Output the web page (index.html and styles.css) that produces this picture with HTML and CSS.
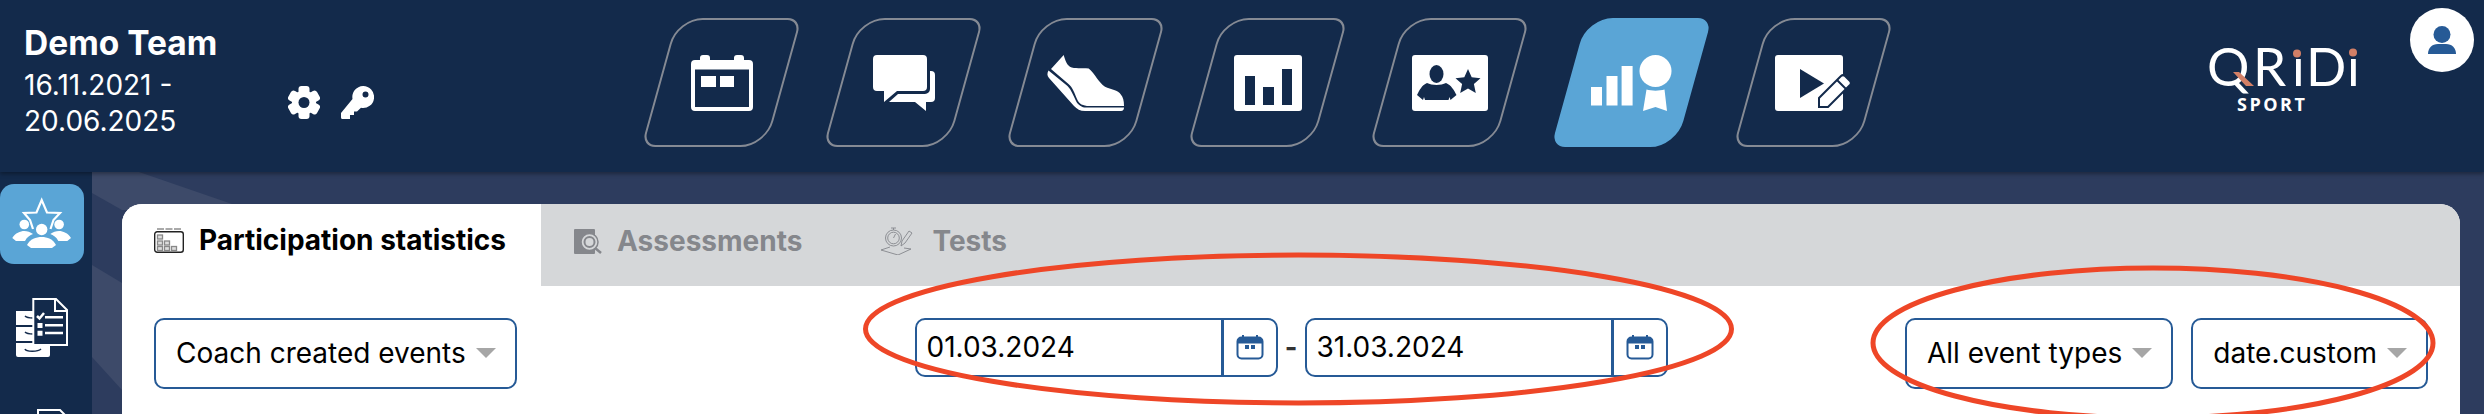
FILE: index.html
```html
<!DOCTYPE html>
<html>
    <head>
        <meta charset="utf-8">
        <title>Participation statistics</title>
        <link rel="stylesheet" href="styles.css">
    </head>
    <body>
        <header class="topbar">
            <div class="team">
                <div class="team-info">
                    <h1>Demo Team</h1>
                    <p>16.11.2021 -<br>20.06.2025</p>
                </div>
                <div class="team-tools">
                    <svg width="32" height="33" viewBox="0 0 32 33">
                        <g fill="#fff">
                            <rect x="10.500" y="0" width="11" height="33" rx="3"/>
                            <rect x="10.500" y="0" width="11" height="33" rx="3" transform="rotate(60 16 16.500)"/>
                            <rect x="10.500" y="0" width="11" height="33" rx="3" transform="rotate(120 16 16.500)"/>
                            <circle cx="16" cy="16.500" r="12"/>
                        </g>
                        <circle cx="16" cy="16.500" r="5.500" fill="#132a4b"/>
                    </svg>
                    <svg width="33" height="33" viewBox="0 0 33 33">
                        <path fill="#fff" fill-rule="evenodd" d="M22 0a11 11 0 1 1-2 21.800L16 25.500h-3v3.500H9v4H1.500a1.500 1.500 0 0 1-1.500-1.500V27L11.500 13A11 11 0 0 1 22 0zm2.500 5.500a3 3 0 1 0 0 6 3 3 0 0 0 0-6z"/>
                    </svg>
                </div>
            </div>
            <nav class="modules">
                <a class="tile">
                    <svg width="62" height="56" viewBox="0 0 62 56">
                        <path fill="#fff" fill-rule="evenodd" d="M12 0h4a3 3 0 0 1 3 3v2h24V3a3 3 0 0 1 3-3h4a3 3 0 0 1 3 3v2h5a4 4 0 0 1 4 4v43a4 4 0 0 1-4 4H4a4 4 0 0 1-4-4V9a4 4 0 0 1 4-4h5V3a3 3 0 0 1 3-3zM4 14.500V52h54V14.500z"/>
                        <rect x="10" y="21" width="15" height="11" fill="#fff"/>
                        <rect x="29" y="21" width="14" height="11" fill="#fff"/>
                    </svg>
                </a>
                <a class="tile">
                    <svg width="62" height="56" viewBox="0 0 62 56" fill="#fff">
                        <path d="M4 0h46a4 4 0 0 1 4 4v28a4 4 0 0 1-4 4H24L11 47V36H4a4 4 0 0 1-4-4V4a4 4 0 0 1 4-4z"/>
                        <path d="M57 16h1a4 4 0 0 1 4 4v23a4 4 0 0 1-4 4h-5v9L42 47H16l9-8h27a5 5 0 0 0 5-5z"/>
                    </svg>
                </a>
                <a class="tile">
                    <svg width="77" height="56" viewBox="0 0 77 56" fill="#fff">
                        <path d="M16.700 0c1.500 5 3 11 8 12.500 6 1.300 12 .3 17 1 6 5 10 14 16.300 18.200 6 2.800 13 3 16 8 2 2.300 3 6 3 11.300H42c-6 0-10-2-12-7-3-7-4-11-8.500-15L4 14z"/>
                        <path d="M1.500 15.500 20.500 31c4 4 6 10 8.500 15 2 4 6 6.600 10 6.600h38c0 2-1 3.400-3 3.400H38c-5 0-8-2-11-5L2 23c-2-2-2-5-.5-7.500z"/>
                    </svg>
                </a>
                <a class="tile">
                    <svg width="68" height="56" viewBox="0 0 68 56">
                        <rect width="68" height="56" rx="3" fill="#fff"/>
                        <g fill="#132a4b">
                            <rect x="11" y="21" width="10" height="29"/>
                            <rect x="29" y="32" width="11" height="18"/>
                            <rect x="48" y="14" width="10" height="36"/>
                        </g>
                    </svg>
                </a>
                <a class="tile">
                    <svg width="76" height="56" viewBox="0 0 76 56">
                        <rect width="76" height="56" rx="3" fill="#fff"/>
                        <g fill="#132a4b">
                            <ellipse cx="24.500" cy="19" rx="7" ry="9"/>
                            <path d="M15 28c5 2.500 14 2.500 19 0 5 2 8 7 10.500 12l-6 5-1-3-1 3H13l-1-3-1 3-6-5c2.500-5 5-10 10-12z"/>
                            <path d="m56 14 3.700 8.300 8.800.9-6.600 5.900 1.900 8.900-7.800-4.600-7.800 4.600 1.900-8.900-6.600-5.900 8.800-.9z"/>
                        </g>
                    </svg>
                </a>
                <a class="tile tile-active">
                    <svg width="81" height="56" viewBox="0 0 81 56" fill="#fff">
                        <rect x="0" y="32" width="11" height="18.500"/>
                        <rect x="15.500" y="21" width="11" height="29.500"/>
                        <rect x="30.600" y="11" width="11" height="39.500"/>
                        <ellipse cx="64.500" cy="16" rx="16" ry="16"/>
                        <path d="M55.500 34.500c5 1.500 13 1.500 18 0L76 56l-11.500-4L52 56z"/>
                    </svg>
                </a>
                <a class="tile">
                    <svg width="77" height="56" viewBox="0 0 77 56">
                        <rect width="68" height="56" rx="3" fill="#fff"/>
                        <path d="M25 14 49 28.500 25 43z" fill="#132a4b"/>
                        <path d="M44 52v-9l22-22a3 3 0 0 1 4 0l5 5a3 3 0 0 1 0 4L53 52z" fill="#fff" stroke="#132a4b" stroke-width="2"/>
                        <path d="m62 25 9 9" stroke="#132a4b" stroke-width="2"/>
                    </svg>
                </a>
            </nav>
            <svg class="logo" width="150" height="66" viewBox="0 0 150 66">
                <text class="logo-name" y="37" x="-3 43 82 96 137">QRıDı</text>
                <path d="M23 23h6l15 14h-8z" fill="#d27f66"/>
                <circle cx="87" cy="4.500" r="4" fill="#d27f66"/>
                <circle cx="143" cy="3.500" r="4" fill="#d27f66"/>
                <text class="logo-sport" x="27" y="62">SPORT</text>
            </svg>
            <div class="avatar">
                <svg width="28" height="28" viewBox="0 0 28 28" fill="#265a96">
                    <circle cx="14" cy="8.500" r="8.500"/>
                    <path d="M0 28c0-6 4-10 10-10h8c6 0 10 4 10 10z"/>
                </svg>
            </div>
        </header>
        <div class="layout">
            <aside class="sidebar">
                <a class="side-item side-active">
                    <svg width="84" height="80" viewBox="0 0 84 80" fill="#fff">
                        <path d="M33 45 30 36 24 29 36.500 28.500 41.700 16 47 28.500 60 29 53.500 36 50.500 45" fill="none" stroke="#fff" stroke-width="2.200"/>
                        <circle cx="41.700" cy="45.500" r="5.700"/>
                        <circle cx="24.300" cy="40.500" r="4.800"/>
                        <circle cx="59.100" cy="40.500" r="4.800"/>
                        <path d="M27 61c3-6 9-8 14.700-8s11.300 2 14.300 8l-4 3H31z"/>
                        <path d="M12.300 54c3-5 8-7 12-7 3 0 6 1 8.700 3-3 1-6 3-8 7h-9z"/>
                        <path d="M71 54c-3-5-8-7-12-7-3 0-6 1-8.700 3 3 1 6 3 8 7h9z"/>
                    </svg>
                </a>
                <a class="side-doc">
                    <svg width="52" height="60" viewBox="0 0 52 60">
                        <path d="M0 13h34v14H0zM0 29h34v14H0zM0 45h34v12a2 2 0 0 1-2 2H2a2 2 0 0 1-2-2z" fill="#fff"/>
                        <path d="M9 18c2 2 5 2 8 2M9 34c2 2 5 2 8 2M9 51c1 3 13 3 16 0" fill="none" stroke="#132a4b" stroke-width="1.500"/>
                        <path d="M17.300 1H40l11 11v35H17.300z" fill="#132a4b" stroke="#fff" stroke-width="2"/>
                        <path d="M39 1v12h12" fill="none" stroke="#fff" stroke-width="2"/>
                        <path d="M29 19.300h18M29 27.300h18M29 35h18" stroke="#fff" stroke-width="2.500"/>
                        <path d="m21 18 2.500 2.500L28 15" fill="none" stroke="#fff" stroke-width="2.500"/>
                        <path d="M21.500 25h5v5h-5zM21.500 32.700h5v5h-5z" fill="#fff"/>
                    </svg>
                </a>
                <a class="side-next">
                    <svg width="34" height="20" viewBox="0 0 34 20">
                        <path d="M1 20V1h22l10 10v9" fill="none" stroke="#fff" stroke-width="2"/>
                    </svg>
                </a>
            </aside>
            <main class="content">
                <svg class="backdrop" width="140" height="242" viewBox="0 0 140 242" fill="#3d4a69">
                    <polygon points="0,0 47,0 140,32 140,40 30,38 0,21"/>
                    <polygon points="0,93 30,111 30,218 0,185"/>
                </svg>
                <section class="panel">
                    <div class="tabs">
                        <div class="tab tab-active">
                            <svg width="30" height="25" viewBox="0 0 30 25" fill="none">
                                <path d="M3 1h7M11.500 1h7M20 1h7" stroke="#555" stroke-width="1"/>
                                <rect x=".7" y="3.700" width="28.600" height="20.600" rx="2.500" stroke="#222" stroke-width="1.400"/>
                                <g stroke="#888" stroke-width="1.300" fill="#ddd">
                                    <rect x="3.500" y="7" width="5" height="4"/>
                                    <rect x="3.500" y="13" width="5" height="4"/>
                                    <rect x="10.500" y="13" width="5" height="4"/>
                                    <rect x="3.500" y="18.500" width="5" height="4"/>
                                    <rect x="10.500" y="18.500" width="5" height="4"/>
                                    <rect x="17.500" y="18.500" width="5" height="4"/>
                                </g>
                            </svg>
                            <span>Participation statistics</span>
                        </div>
                        <div class="tab">
                            <svg width="28" height="25" viewBox="0 0 28 25" fill="none">
                                <rect width="21" height="25" rx="1" fill="#85878c"/>
                                <circle cx="15.500" cy="13" r="8.500" fill="#d5d7d9" stroke="#85878c" stroke-width="1.500"/>
                                <circle cx="15.500" cy="13" r="5" stroke="#85878c" stroke-width="2"/>
                                <path d="m21 19 6 5" stroke="#85878c" stroke-width="2.500"/>
                            </svg>
                            <span>Assessments</span>
                        </div>
                        <div class="tab tab-tests">
                            <svg width="33" height="28" viewBox="0 0 33 28" fill="none" stroke="#85878c" stroke-width=".9">
                                <circle cx="12.500" cy="11" r="8"/>
                                <circle cx="12.500" cy="11" r="5.800"/>
                                <path d="M10 1h5M12.500 1v2M12.500 11l2-4"/>
                                <path d="m21 14 7-10 3 2-7 10-4 3z"/>
                                <path d="M9 20 0 23l17 5 13-6-7-1"/>
                            </svg>
                            <span>Tests</span>
                        </div>
                    </div>
                    <div class="filters">
                        <div class="picker">Coach created events<i class="caret"></i></div>
                        <div class="dates">
                            <div class="date-field">
                                <span class="date-value">01.03.2024</span>
                                <span class="date-btn">
                                    <svg width="28" height="25" viewBox="0 0 28 25" fill="none">
                                        <rect x="1.500" y="2.500" width="25" height="21" rx="4" stroke="#265a96" stroke-width="2"/>
                                        <path d="M1.500 8V6.500a4 4 0 0 1 4-4h17a4 4 0 0 1 4 4V8z" fill="#265a96" stroke="#265a96"/>
                                        <path d="M7 0v3M21 0v3" stroke="#265a96" stroke-width="2"/>
                                        <path d="M9 10h4v4H9zM15 10h4v4h-4z" fill="#265a96"/>
                                    </svg>
                                </span>
                            </div>
                            <span class="date-dash">-</span>
                            <div class="date-field">
                                <span class="date-value">31.03.2024</span>
                                <span class="date-btn">
                                    <svg width="28" height="25" viewBox="0 0 28 25" fill="none">
                                        <rect x="1.500" y="2.500" width="25" height="21" rx="4" stroke="#265a96" stroke-width="2"/>
                                        <path d="M1.500 8V6.500a4 4 0 0 1 4-4h17a4 4 0 0 1 4 4V8z" fill="#265a96" stroke="#265a96"/>
                                        <path d="M7 0v3M21 0v3" stroke="#265a96" stroke-width="2"/>
                                        <path d="M9 10h4v4H9zM15 10h4v4h-4z" fill="#265a96"/>
                                    </svg>
                                </span>
                            </div>
                        </div>
                        <div class="pickers-right">
                            <div class="picker">All event types<i class="caret"></i></div>
                            <div class="picker">date.custom<i class="caret"></i></div>
                        </div>
                    </div>
                </section>
            </main>
        </div>
        <svg class="marks" width="2484" height="414" viewBox="0 0 2484 414" fill="none" stroke="#ee4627" stroke-width="5">
            <ellipse cx="1298.500" cy="329" rx="433" ry="74"/>
            <ellipse cx="2153" cy="343" rx="280" ry="75"/>
        </svg>
    </body>
</html>
```

FILE: styles.css
```css
*{box-sizing:border-box;}
html,body{margin:0; width:2484px; height:414px; overflow:hidden;}
body{position:relative; display:flex; flex-direction:column; background-color:#2d3c5e; font-family:"Inter","Liberation Sans",sans-serif; color:#000;}

.topbar{display:flex; flex:none; height:172px; background-color:#132a4b; color:#fff; box-shadow:0 2px 4px rgba(0,0,0,.35); position:relative; z-index:1;}

.team{display:flex; flex:none; width:644px; padding-left:24px;}
.team-info{width:264px; padding-top:23px;}
.team-info h1{margin:0 0 4px; font-size:33.500px; line-height:40px; font-weight:700;}
.team-info p{margin:0; font-size:28px; line-height:36px; font-weight:400;}
.team-tools{display:flex; gap:21px; padding-top:86px;}
.team-tools svg{display:block;}

.modules{display:flex; gap:27px; padding-top:18px;}
.tile{position:relative; display:flex; align-items:center; justify-content:center; width:155px; height:129px;}
.tile::before{content:""; position:absolute; top:0; bottom:0; left:15px; right:15px; transform:skewX(-15.5deg); border:2px solid #858a94; border-radius:26px 14px 26px 14px;}
.tile svg{position:relative; display:block;}
.tile-active::before{background-color:#5aa5d6; border-color:#5aa5d6;}

.logo{flex:none; margin:49px 0 0 auto; overflow:visible;}
.logo-name{font-family:"Lato",sans-serif; font-size:53px; fill:#fff;}
.logo-sport{font-family:"Open Sans",sans-serif; font-size:18px; font-weight:700; letter-spacing:2.500px; fill:#fff;}
.avatar{display:flex; flex:none; align-items:center; justify-content:center; width:64px; height:64px; margin:8px 10px 0 50px; border-radius:50%; background-color:#fff;}

.layout{display:flex; flex:1; min-height:0;}

.sidebar{display:flex; flex:none; flex-direction:column; width:92px; padding-top:12px; background-color:#132a4b; overflow:hidden;}
.sidebar svg{display:block;}
.side-item{flex:none; width:84px; height:80px; border-radius:14px;}
.side-active{background-color:#5aa5d6;}
.side-doc{flex:none; margin:34px 0 0 16px;}
.side-next{flex:none; margin:51px 0 0 37px;}

.content{position:relative; flex:1; min-width:0; padding:32px 24px 0 30px; overflow:hidden;}
.backdrop{position:absolute; top:0; left:0;}

.panel{position:relative; height:100%; background-color:#fff; border-radius:20px 20px 0 0; overflow:hidden;}

.tabs{display:flex; height:82px; background-color:#d5d7d9;}
.tab{display:flex; gap:15px; align-items:center; height:40px; margin-top:17px; padding:0 46px 0 33px; font-size:28px; font-weight:700; color:#85878c;}
.tab svg{flex:none;}
.tab-tests{gap:18px;}
.tab-active{height:82px; margin-top:0; padding:0 35px 10px 32px; background-color:#fff; color:#000;}

.filters{display:grid; grid-template-columns:1fr auto 1fr; align-items:start; padding:32px 32px 0;}

.picker{display:inline-flex; align-items:center; gap:10px; height:71px; padding:0 19px 2px 20px; border:2px solid #265a96; border-radius:10px; font-size:28px; white-space:nowrap; justify-self:start;}
.caret{flex:none; width:0; height:0; border-left:10px solid transparent; border-right:10px solid transparent; border-top:10px solid #a6a6a6;}
.pickers-right{display:flex; gap:18px; justify-self:end;}

.dates{display:flex; align-items:center;}
.date-field{display:flex; align-items:stretch; width:363px; height:59px; border:2px solid #265a96; border-radius:10px; font-size:28px;}
.date-value{flex:1; display:flex; align-items:center; padding:0 0 2px 10px;}
.date-btn{display:flex; flex:none; align-items:center; justify-content:center; width:55px; border-left:3px solid #265a96;}
.date-dash{width:27px; text-align:center; font-size:27px; font-weight:700; color:#333;}

.marks{position:absolute; top:0; left:0; pointer-events:none; z-index:2;}
```
